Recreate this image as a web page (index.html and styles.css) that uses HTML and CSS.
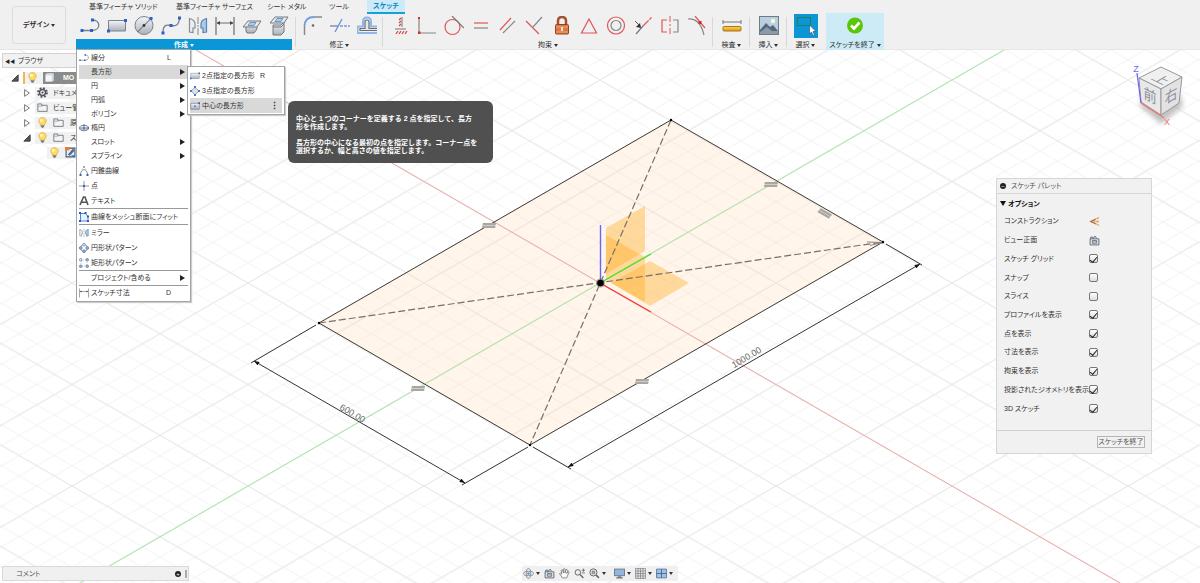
FILE: index.html
```html
<!DOCTYPE html>
<html lang="ja">
<head>
<meta charset="utf-8">
<title>スケッチ</title>
<link rel="stylesheet" href="styles.css">
</head>
<body>
<svg class="canvas" viewBox="0 0 1200 583" preserveAspectRatio="xMidYMid slice" aria-hidden="true">
  <defs>
    <pattern id="minor" x="600" y="283" width="35.2" height="20.3" patternUnits="userSpaceOnUse">
      <path d="M0 0L35.2 20.3M0 20.3L35.2 0" stroke="#f3f3f3" stroke-width="1"/>
    </pattern>
    <pattern id="major" x="600" y="283" width="176" height="101.5" patternUnits="userSpaceOnUse">
      <path d="M0 0L176 101.5M0 101.5L176 0" stroke="#e8e8e8" stroke-width="1"/>
    </pattern>
    <marker id="arrow" viewBox="0 0 8 6" refX="8" refY="3" markerWidth="6" markerHeight="4" markerUnits="userSpaceOnUse" orient="auto-start-reverse"><path d="M0 0L8 3L0 6z" fill="#111"/></marker>
    <g id="equal"><path d="M-6 -2H7L6 3H-7z" fill="#cfccc8"/><path d="M-6 -2H7L6.500 0H-6.500zM-6.500 1H6.500L6 3H-7z" fill="#aaa7a3"/></g>
  </defs>
  <rect width="1200" height="583" fill="#fff"/>
  <rect width="1200" height="583" fill="url(#minor)"/>
  <rect width="1200" height="583" fill="url(#major)"/>
  <path d="M671 120L883 242L530 445L319 323z" fill="#ffd8b0" fill-opacity=".25"/>
  <path d="M80 583L1004 50" stroke="#a5e8a5"/>
  <path d="M196 50L1120 583" stroke="#f0a9a6"/>
  <path d="M671 120L883 242L530 445L319 323z" fill="none" stroke="#3c3a38"/>
  <g fill="#ffa917" fill-opacity=".37">
    <path d="M606 228L645 206V251L606 274z"/>
    <path d="M606 235L645 257V302L606 280z"/>
    <path d="M650 261L689 283L650 306L611 283z"/>
  </g>
  <path d="M319 323L883 242M671 120L530 445" stroke="#77706a" stroke-width="1.2" stroke-dasharray="7 3"/>
  <path d="M600.500 225V283" stroke="#6a63f5" stroke-width="1.400"/>
  <path d="M600 283L651 254" stroke="#42e52b" stroke-width="1.400"/>
  <path d="M600 283L651 312" stroke="#fb3a36" stroke-width="1.400"/>
  <circle cx="600.500" cy="283" r="4.500" fill="#777" opacity=".6"/><circle cx="600.500" cy="283" r="3.300" fill="#000"/>
  <g stroke="#333" fill="none">
    <path d="M316 325L251 363M528 447L462 485M533 447L571 469M886 244L922 265"/>
    <path d="M254 361L465 483" marker-start="url(#arrow)" marker-end="url(#arrow)"/>
    <path d="M568 467L920 264" marker-start="url(#arrow)" marker-end="url(#arrow)"/>
  </g>
  <use href="#equal" x="489" y="225"/><use href="#equal" x="771" y="184"/>
  <use href="#equal" x="418" y="388"/><use href="#equal" x="642" y="381"/>
  <g transform="translate(825 213) rotate(30)"><use href="#equal"/></g>
  <path d="M867 242L882 242.500L870 245.500M875 243h8" fill="none" stroke="#8d8882"/>
  <circle cx="883" cy="242" r="1.200"/><circle cx="671" cy="120" r="1.200"/><circle cx="530" cy="445" r="1.200"/><circle cx="319" cy="323" r="1.200"/>
  <text class="dimension" transform="translate(748 360) rotate(-30)">1000.00</text>
  <text class="dimension" transform="translate(351 416) rotate(30)">600.00</text>
</svg>

<svg class="defs" aria-hidden="true"><defs>
  <linearGradient id="steel" x1="0" y1="0" x2="0" y2="1"><stop offset="0" stop-color="#f4f6f8"/><stop offset="1" stop-color="#a9b1ba"/></linearGradient>
  <linearGradient id="amber" x1="0" y1="0" x2="0" y2="1"><stop offset="0" stop-color="#ffd45a"/><stop offset="1" stop-color="#dd9812"/></linearGradient>
  <symbol id="i-line" viewBox="0 0 20 20"><path d="M2 14.500H12C21 14.500 21 4 12.500 4" fill="none" stroke="#777e86" stroke-width="1.300"/><path d="M.5 13h3v3h-3zM10 13h3v3h-3zM11 2.500h3v3h-3z" fill="#2c62c8"/></symbol>
  <symbol id="i-rect" viewBox="0 0 20 20"><path d="M1.500 4.500h17v10.500h-17z" fill="url(#steel)" stroke="#7b838c"/><path d="M17 3h3v3h-3zM0 13.500h3v3H0z" fill="#2c62c8"/></symbol>
  <symbol id="i-circle" viewBox="0 0 20 20"><circle cx="10" cy="9.500" r="9" fill="url(#steel)" stroke="#7b838c"/><path d="M3.500 16L17 2.500" stroke="#555"/><circle cx="10" cy="9.500" r="1.400" fill="#333"/><path d="M15.500 1h3v3h-3z" fill="#2c62c8"/></symbol>
  <symbol id="i-spline" viewBox="0 0 20 20"><path d="M2 17C2 9 5 8.500 10 9.500S18 9 18.500 2" fill="none" stroke="#777e86" stroke-width="1.300"/><path d="M.5 15.500h3v3h-3zM8.500 8h3v3h-3zM17 .5h3v3h-3z" fill="#2c62c8"/></symbol>
  <symbol id="i-mirror" viewBox="0 0 20 20"><path d="M1.500 2.500Q7 4 7 8V12H5v4.500L1.500 16z" fill="#eceef0" stroke="#868c93" stroke-width="1.200"/><path d="M18.500 2.500Q13 4 13 8V12h2v4.500l3.500-.5z" fill="#a7cbed" stroke="#5d83ab" stroke-width="1.200"/><path d="M10 1v18" stroke="#888" stroke-dasharray="7 1 2 1"/></symbol>
  <symbol id="i-dim" viewBox="0 0 20 20"><path d="M1 1v18M19 1v18M2 7h16" stroke="#686e75" stroke-width="1.200"/><path d="M1.500 7L5 5v4zM18.500 7L15 5v4z" fill="#444"/></symbol>
  <symbol id="i-project" viewBox="0 0 20 20"><path d="M4 8h9l2-2v7l-3 4H5l-1-2z" fill="url(#steel)" stroke="#727980"/><path d="M6 5h13l-4 6H1z" fill="#e6eaed" stroke="#727980"/><path d="M8 6.500h6l-2 3H6z" fill="#a9d0f1" stroke="#5d83ab" stroke-width=".8"/></symbol>
  <symbol id="i-intersect" viewBox="0 0 20 20"><path d="M4 9h8l3-3v10l-3 3H4z" fill="url(#steel)" stroke="#727980"/><path d="M4 11h8l3-3" fill="none" stroke="#727980"/><path d="M6 1h13l-4 6H1z" fill="#e6eaed" stroke="#727980"/><path d="M8 2.500h6l-2 3H6z" fill="#a9d0f1" stroke="#5d83ab" stroke-width=".8"/></symbol>
  <symbol id="i-fillet" viewBox="0 0 20 20"><path d="M1.500 10Q2 1 11 1" fill="none" stroke="#6f9fe0" stroke-width="1.800"/><path d="M1.500 10v9M11 1h8" stroke="#858a90" stroke-width="1.500"/><circle cx="10" cy="9.500" r="1.300" fill="#666"/></symbol>
  <symbol id="i-trim" viewBox="0 0 20 20"><path d="M0 10h8" stroke="#7b838c" stroke-width="1.300"/><path d="M5 16L12 3" stroke="#5d92dc" stroke-width="1.300"/><path d="M10 10h10" stroke="#6f9fe0" stroke-width="1.300" stroke-dasharray="3 1"/></symbol>
  <symbol id="i-offset" viewBox="0 0 20 20"><path d="M0.500 16.500V10.500H6V6q0-4.500 4-4.500t4 4.500v4.500h6M0 17h20" fill="none" stroke="#8eb6ea" stroke-width="2"/><path d="M20 14.500H3V12.500h5V6q0-2 2-2t2 2v6.500h8" fill="#e6e8ea" stroke="#676e77" stroke-width="1.200"/></symbol>
  <symbol id="i-ground" viewBox="0 0 20 20"><path d="M5 13h11M12 1v10" stroke="#777"/><path d="M6 18l2-3M9 18l2-3M12 18l2-3M15 18l2-3M9 4l2-2M9 7l2-2M9 10l2-2" stroke="#d9484b" stroke-width="1.300"/></symbol>
  <symbol id="i-coincident" viewBox="0 0 20 20"><path d="M2 3v14M2 17h17" stroke="#868686" stroke-width="1.200"/><path d="M1 1h2v2H1zM1 15.500h2.500v2.500H1z" fill="#d32d32"/></symbol>
  <symbol id="i-tangent" viewBox="0 0 20 20"><circle cx="8.500" cy="11" r="7.500" fill="none" stroke="#df5557" stroke-width="1.200"/><path d="M8 0l12 12" stroke="#777" stroke-width="1.200"/></symbol>
  <symbol id="i-equal" viewBox="0 0 20 20"><path d="M3 7h14" stroke="#df5557" stroke-width="1.200"/><path d="M3 12h14" stroke="#888" stroke-width="1.200"/></symbol>
  <symbol id="i-parallel" viewBox="0 0 20 20"><path d="M2 14L13 2" stroke="#df5557" stroke-width="1.200"/><path d="M5 17L17 5" stroke="#888" stroke-width="1.200"/></symbol>
  <symbol id="i-perp" viewBox="0 0 20 20"><path d="M1 5l13 13" stroke="#df5557" stroke-width="1.200"/><path d="M8 11l9-10" stroke="#888" stroke-width="1.200"/></symbol>
  <symbol id="i-lock" viewBox="0 0 20 20"><path d="M6 9V5q0-4 4-4t4 4v4" fill="none" stroke="#a55131" stroke-width="2.500"/><rect x="3.500" y="8.500" width="13" height="9.500" rx="1" fill="#d9783f" stroke="#94431f"/><path d="M4 11h12M4 16h12" stroke="#f0a87b"/><path d="M10 11v4" stroke="#fff" stroke-width="1.500"/></symbol>
  <symbol id="i-triangle" viewBox="0 0 20 20"><path d="M10 3l7.500 14h-15z" fill="none" stroke="#df5557" stroke-width="1.200"/></symbol>
  <symbol id="i-concentric" viewBox="0 0 20 20"><circle cx="10" cy="9.500" r="8.500" fill="none" stroke="#df5557" stroke-width="1.200"/><circle cx="10" cy="9.500" r="5" fill="none" stroke="#888" stroke-width="1.200"/></symbol>
  <symbol id="i-collinear" viewBox="0 0 20 20"><path d="M3 18l7-8" stroke="#777" stroke-width="1.200"/><path d="M10 10l9-9" stroke="#df5557" stroke-width="1.300" stroke-dasharray="8 1 3 1"/><path d="M2 5l5 5" stroke="#555"/><path d="M8 12l-5-1 4-4z" fill="#333"/></symbol>
  <symbol id="i-symmetry" viewBox="0 0 20 20"><path d="M7 4H2v12h5" fill="none" stroke="#df5557" stroke-width="1.200"/><path d="M13 4h5v12h-5" fill="none" stroke="#888" stroke-width="1.200"/><path d="M10 0v20" stroke="#df5557" stroke-dasharray="6 2 2 2"/></symbol>
  <symbol id="i-curvature" viewBox="0 0 20 20"><path d="M1 3q12-1 16 16" fill="none" stroke="#888" stroke-width="1.200"/><path d="M8 0l10 12" stroke="#df5557" stroke-width="1.200"/><path d="M11.500 5h3v3h-3z" fill="#d32d32"/></symbol>
  <symbol id="i-measure" viewBox="0 0 20 20"><path d="M1 6h18M1 4v4M19 4v4" stroke="#777"/><rect x="1" y="10.500" width="18" height="4.500" rx="1" fill="url(#amber)" stroke="#a9781c"/></symbol>
  <symbol id="i-image" viewBox="0 0 20 20"><rect x=".5" y=".5" width="19" height="18" fill="#b9d0e2" stroke="#707a83"/><path d="M1 14l6-7 4 4 3-2 5 6v3H1z" fill="#566779"/><path d="M1 16l7-5 5 4 6 0v3H1z" fill="#8b9ba9"/><circle cx="14" cy="5" r="2.200" fill="#fffbd0"/></symbol>
  <symbol id="i-select" viewBox="0 0 24 24"><path d="M3.500 3.500h13v8h-13z" fill="none" stroke="#22815d" stroke-width="1.200"/><path d="M15.500 11v9l2-2 1.500 3.500 1.500-.7L19 17.500h3z" fill="#fff" stroke="#456" stroke-width=".7"/></symbol>
  <symbol id="i-done" viewBox="0 0 20 20"><circle cx="10" cy="9.500" r="8" fill="#5bc607"/><path d="M6 9.500l3 3 5.500-6" fill="none" stroke="#fff" stroke-width="2.600"/></symbol>
  <symbol id="i-diamond" viewBox="0 0 20 20"><path d="M10 2.500l7.500 7.500-7.500 7.500L2.500 10z" fill="#dde2e7" stroke="#7b838c" stroke-width="1.500"/><path d="M8 0h4v4H8zM0 8h4v4H0zM16 8h4v4h-4zM8 16h4v4H8z" fill="#4479cf"/></symbol>
  <symbol id="i-centerrect" viewBox="0 0 20 20"><path d="M1.500 4.500h17v12h-17z" fill="url(#steel)" stroke="#7b838c" stroke-width="1.500"/><path d="M8.500 9h3v3h-3zM16.500 2.500H20V6h-3.500z" fill="#2c62c8"/></symbol>
  <symbol id="i-ellipse" viewBox="0 0 20 20"><ellipse cx="10" cy="10" rx="9" ry="5.500" fill="url(#steel)" stroke="#68727d" stroke-width="1.500"/><path d="M1 10h18M10 5v10" stroke="#667"/><path d="M8.500 8.500h3v3h-3zM17 8.500h3v3h-3zM8.500 3h3v3h-3z" fill="#2c62c8"/></symbol>
  <symbol id="i-conic" viewBox="0 0 20 20"><path d="M3 17C4 4 16 4 17 17" fill="none" stroke="#68727d" stroke-width="1.600"/><path d="M5 7l5-5 5 5" fill="none" stroke="#999" stroke-dasharray="2 1"/><path d="M1 16h4v4H1zM15 16h4v4h-4z" fill="#2c62c8"/><circle cx="10" cy="2" r="1.800" fill="#888"/></symbol>
  <symbol id="i-point" viewBox="0 0 20 20"><path d="M10 0v20M0 10h20" stroke="#778" stroke-width="1.500"/><path d="M8 8h4v4H8z" fill="#2c62c8"/></symbol>
  <symbol id="i-glyph" viewBox="0 0 20 20"><path d="M2 18L9 2h3l6 16M5.500 12.500h9" fill="none" stroke="#555" stroke-width="3.200"/></symbol>
  <symbol id="i-mesh" viewBox="0 0 20 20"><path d="M3 3h10l5 6v9H3z" fill="#e7f1fb" stroke="#4d85cf" stroke-width="2"/><path d="M0 0h4v4H0zM11 0h4v4h-4zM0 16h4v4H0zM16 16h4v4h-4zM16 7h4v4h-4z" fill="#235bc2"/></symbol>
  <symbol id="i-circpat" viewBox="0 0 20 20"><circle cx="10" cy="10" r="7" fill="none" stroke="#778" stroke-width="1.300"/><g fill="#8cb4e0" stroke="#4e6f95" stroke-width="1.300"><circle cx="3.500" cy="10" r="2.800"/><circle cx="16.500" cy="10" r="2.800"/><circle cx="10" cy="16.500" r="2.800"/><circle cx="10" cy="3.500" r="2.800" fill="#eee"/></g></symbol>
  <symbol id="i-rectpat" viewBox="0 0 20 20"><path d="M4 4h12v12H4z" fill="none" stroke="#889" stroke-dasharray="2 2"/><g fill="#8cb4e0" stroke="#4e6f95" stroke-width="1.300"><circle cx="16.500" cy="3.500" r="2.600"/><circle cx="3.500" cy="16.500" r="2.600"/><circle cx="16.500" cy="16.500" r="2.600"/><circle cx="3.500" cy="3.500" r="2.600" fill="#eee"/></g></symbol>
  <symbol id="i-bulb" viewBox="0 0 20 20"><path d="M6 13Q2 9 3.500 5 6 1 10 1t6.500 4Q18 9 14 13v2H6z" fill="#ffdc61" stroke="#c99a2b"/><ellipse cx="8" cy="6" rx="2.500" ry="3" fill="#fff8cf"/><path d="M7 15h6v3l-3 2-3-2z" fill="#7c7f84"/></symbol>
  <symbol id="i-folder" viewBox="0 0 20 20"><path d="M1.500 17V3.500h7V6h10v11z" fill="#f4f4f4" stroke="#6c747e" stroke-width="1.600"/><path d="M2 7.500h8" stroke="#6c747e"/></symbol>
  <symbol id="i-gear" viewBox="0 0 20 20"><circle cx="10" cy="10" r="8" fill="none" stroke="#50545a" stroke-width="3.500" stroke-dasharray="3.300 3"/><circle cx="10" cy="10" r="5.500" fill="#eee" stroke="#50545a" stroke-width="2.500"/><circle cx="10" cy="10" r="2" fill="#50545a"/></symbol>
  <symbol id="i-cube" viewBox="0 0 20 20"><path d="M2 5l3-3h13v13l-3 3H2z" fill="#f4f6f8" stroke="#7c858e"/><path d="M2 5h13v13M15 5l3-3" fill="none" stroke="#a7afb7"/></symbol>
  <symbol id="i-sketch" viewBox="0 0 20 20"><path d="M2 2h16v16H2z" fill="#e8eff7" stroke="#3c5878" stroke-width="2"/><path d="M5 14l9-11 4 3-9 10z" fill="#596b80"/><path d="M0 0h8v6H0z" fill="#ef7b24"/><path d="M12 15h6v3h-6z" fill="#3b71b5"/></symbol>
  <symbol id="i-open" viewBox="0 0 10 10"><path d="M9 1v8H1z" fill="#555" stroke="#333"/></symbol>
  <symbol id="i-closed" viewBox="0 0 10 10"><path d="M2 .8L8 5 2 9.200z" fill="#fff" stroke="#555"/></symbol>
  <symbol id="i-construct" viewBox="0 0 20 20"><path d="M18 3L3 10l15 7M18 10H8" fill="none" stroke="#ef9a42" stroke-width="2.400" stroke-dasharray="5 1"/><path d="M12 6L3 10l9 4" fill="none" stroke="#7d6b5c" stroke-width="1.800"/></symbol>
  <symbol id="i-lookat" viewBox="0 0 20 20"><path d="M2 7h16v11H2zM3 7V4h4v3M8 6l3-4 3 4" fill="#e7ebef" stroke="#56616e" stroke-width="1.600"/><path d="M6 10h8v5H6zM6 12.500h8" fill="#fff" stroke="#56616e" stroke-width="1.400"/></symbol>
  <symbol id="i-orbit" viewBox="0 0 20 20"><ellipse cx="10" cy="10" rx="9" ry="4" fill="none" stroke="#7d8085" stroke-width="1.500"/><ellipse cx="10" cy="10" rx="4" ry="9" fill="none" stroke="#7d8085" stroke-width="1.500"/><circle cx="10" cy="10" r="2.500" fill="#4aa4ec"/></symbol>
  <symbol id="i-hand" viewBox="0 0 20 20"><path d="M6 18L1 10q2-2 4 1L4 4q1-2 3 0l1 5V2q2-2 3 0v7l2-6q2-1 3 1l-2 6 2-3q3-1 2 1l-4 10z" fill="#fafafa" stroke="#666" stroke-width="1.300"/></symbol>
  <symbol id="i-zoom" viewBox="0 0 20 20"><circle cx="7" cy="8" r="5" fill="#e7f2fa" stroke="#666" stroke-width="1.800"/><path d="M11 12l6 6" stroke="#666" stroke-width="2.500"/><path d="M14 4h6M17 1v6M14 9h6" stroke="#555" stroke-width="1.300"/></symbol>
  <symbol id="i-fit" viewBox="0 0 20 20"><circle cx="8" cy="8" r="6.500" fill="#e9eef2" stroke="#666" stroke-width="1.800"/><path d="M5.500 5.500h5v5h-5z" fill="#9bb0c2" stroke="#666"/><path d="M13 13l5 5" stroke="#666" stroke-width="2.800"/></symbol>
  <symbol id="i-display" viewBox="0 0 20 20"><rect x="1" y="2" width="18" height="12" fill="#90b7e4" stroke="#6d737a" stroke-width="1.600"/><path d="M7 15h6v2h3v2H4v-2h3z" fill="#777"/></symbol>
  <symbol id="i-grid" viewBox="0 0 20 20"><path d="M1 1h18v18H1zM5.500 1v18M10 1v18M14.500 1v18M1 5.500h18M1 10h18M1 14.500h18" fill="#e9e9e9" stroke="#70757b" stroke-width="1.200"/></symbol>
  <symbol id="i-views" viewBox="0 0 20 20"><path d="M1 2h18v16H1z" fill="#9fc1e8" stroke="#59789d" stroke-width="1.600"/><path d="M10 2v16M1 10h18" stroke="#476486" stroke-width="1.600"/></symbol>
</defs></svg>

<header class="toolbar">
  <button class="workspace">デザイン <span class="caret"></span></button>
  <div class="ribbon">
    <nav class="tabs">
      <button class="tab">基準フィーチャ ソリッド</button>
      <button class="tab">基準フィーチャ サーフェス</button>
      <button class="tab">シート メタル</button>
      <button class="tab">ツール</button>
      <button class="tab tab-active">スケッチ</button>
    </nav>
    <div class="groups">
      <section class="group group-create">
        <div class="tools">
          <button class="tool" aria-label="線分"><svg><use href="#i-line"/></svg></button>
          <button class="tool" aria-label="長方形"><svg><use href="#i-rect"/></svg></button>
          <button class="tool" aria-label="円"><svg><use href="#i-circle"/></svg></button>
          <button class="tool" aria-label="スプライン"><svg><use href="#i-spline"/></svg></button>
          <button class="tool" aria-label="ミラー"><svg><use href="#i-mirror"/></svg></button>
          <button class="tool" aria-label="寸法"><svg><use href="#i-dim"/></svg></button>
          <button class="tool" aria-label="プロジェクト"><svg><use href="#i-project"/></svg></button>
          <button class="tool" aria-label="交差"><svg><use href="#i-intersect"/></svg></button>
        </div>
        <button class="group-label">作成 <span class="caret"></span></button>
      </section>
      <section class="group">
        <div class="tools">
          <button class="tool" aria-label="フィレット"><svg><use href="#i-fillet"/></svg></button>
          <button class="tool" aria-label="トリム"><svg><use href="#i-trim"/></svg></button>
          <button class="tool" aria-label="オフセット"><svg><use href="#i-offset"/></svg></button>
        </div>
        <button class="group-label">修正 <span class="caret"></span></button>
      </section>
      <section class="group">
        <div class="tools">
          <button class="tool" aria-label="水平/垂直"><svg><use href="#i-ground"/></svg></button>
          <button class="tool" aria-label="一致"><svg><use href="#i-coincident"/></svg></button>
          <button class="tool" aria-label="接線"><svg><use href="#i-tangent"/></svg></button>
          <button class="tool" aria-label="等値"><svg><use href="#i-equal"/></svg></button>
          <button class="tool" aria-label="平行"><svg><use href="#i-parallel"/></svg></button>
          <button class="tool" aria-label="直交"><svg><use href="#i-perp"/></svg></button>
          <button class="tool" aria-label="固定"><svg><use href="#i-lock"/></svg></button>
          <button class="tool" aria-label="中点"><svg><use href="#i-triangle"/></svg></button>
          <button class="tool" aria-label="同心円"><svg><use href="#i-concentric"/></svg></button>
          <button class="tool" aria-label="同一直線上"><svg><use href="#i-collinear"/></svg></button>
          <button class="tool" aria-label="対称"><svg><use href="#i-symmetry"/></svg></button>
          <button class="tool" aria-label="曲率"><svg><use href="#i-curvature"/></svg></button>
        </div>
        <button class="group-label">拘束 <span class="caret"></span></button>
      </section>
      <section class="group group-single">
        <div class="tools"><button class="tool" aria-label="計測"><svg><use href="#i-measure"/></svg></button></div>
        <button class="group-label">検査 <span class="caret"></span></button>
      </section>
      <section class="group group-single">
        <div class="tools"><button class="tool" aria-label="画像"><svg><use href="#i-image"/></svg></button></div>
        <button class="group-label">挿入 <span class="caret"></span></button>
      </section>
      <section class="group group-single group-last">
        <div class="tools"><button class="tool tool-selected" aria-label="選択"><svg><use href="#i-select"/></svg></button></div>
        <button class="group-label">選択 <span class="caret"></span></button>
      </section>
      <section class="group group-finish">
        <div class="tools"><button class="tool" aria-label="終了"><svg><use href="#i-done"/></svg></button></div>
        <button class="group-label">スケッチを終了 <span class="caret"></span></button>
      </section>
    </div>
  </div>
</header>

<aside class="browser">
  <h2 class="browser-title"><span class="rewind">◀◀</span>ブラウザ</h2>
  <ul class="tree">
    <li class="node node-root"><svg class="twist"><use href="#i-open"/></svg><span class="node-body root-body"><svg><use href="#i-bulb"/></svg><span class="root-name"><svg><use href="#i-cube"/></svg>MO</span></span></li>
    <li class="node"><svg class="twist"><use href="#i-closed"/></svg><span class="node-body"><svg><use href="#i-gear"/></svg>ドキュメ</span></li>
    <li class="node"><svg class="twist"><use href="#i-closed"/></svg><span class="node-body"><svg><use href="#i-folder"/></svg>ビュー管</span></li>
    <li class="node"><svg class="twist"><use href="#i-closed"/></svg><span class="node-body"><svg><use href="#i-bulb"/></svg><svg><use href="#i-folder"/></svg>原</span></li>
    <li class="node"><svg class="twist"><use href="#i-open"/></svg><span class="node-body"><svg><use href="#i-bulb"/></svg><svg><use href="#i-folder"/></svg>ス</span></li>
    <li class="node node-leaf"><span class="node-body"><svg><use href="#i-bulb"/></svg><svg><use href="#i-sketch"/></svg></span></li>
  </ul>
</aside>

<div class="menu create-menu">
  <button class="item"><svg><use href="#i-line"/></svg><span>線分</span><kbd>L</kbd></button>
  <button class="item item-on"><span>長方形</span><i class="more"></i></button>
  <button class="item"><span>円</span><i class="more"></i></button>
  <button class="item"><span>円弧</span><i class="more"></i></button>
  <button class="item"><span>ポリゴン</span><i class="more"></i></button>
  <button class="item"><svg><use href="#i-ellipse"/></svg><span>楕円</span></button>
  <button class="item"><span>スロット</span><i class="more"></i></button>
  <button class="item"><span>スプライン</span><i class="more"></i></button>
  <button class="item item-tall"><svg><use href="#i-conic"/></svg><span>円錐曲線</span></button>
  <button class="item item-tall"><svg><use href="#i-point"/></svg><span>点</span></button>
  <button class="item item-tall"><svg><use href="#i-glyph"/></svg><span>テキスト</span></button>
  <hr>
  <button class="item item-tall"><svg><use href="#i-mesh"/></svg><span>曲線をメッシュ断面にフィット</span></button>
  <hr>
  <button class="item item-tall"><svg><use href="#i-mirror"/></svg><span>ミラー</span></button>
  <button class="item item-tall"><svg><use href="#i-circpat"/></svg><span>円形状パターン</span></button>
  <button class="item item-tall"><svg><use href="#i-rectpat"/></svg><span>矩形状パターン</span></button>
  <hr>
  <button class="item"><span>プロジェクト/含める</span><i class="more"></i></button>
  <hr>
  <button class="item"><svg><use href="#i-dim"/></svg><span>スケッチ寸法</span><kbd>D</kbd></button>
</div>

<div class="menu rect-menu">
  <button class="item item-tall"><svg><use href="#i-rect"/></svg><span>2点指定の長方形</span><kbd>R</kbd></button>
  <button class="item item-tall"><svg><use href="#i-diamond"/></svg><span>3点指定の長方形</span></button>
  <button class="item item-tall item-on"><svg><use href="#i-centerrect"/></svg><span>中心の長方形</span><b class="dots">⋮</b></button>
</div>

<div class="tip" role="tooltip">
  <p>中心と 1 つのコーナーを定義する 2 点を指定して、長方<br>形を作成します。</p>
  <p>長方形の中心になる最初の点を指定します。コーナー点を<br>選択するか、幅と高さの値を指定します。</p>
</div>

<svg class="viewcube" viewBox="0 0 60 70" aria-hidden="true">
  <defs><filter id="soft"><feGaussianBlur stdDeviation="2.500"/></filter></defs>
  <path d="M10 46L31 64L53 46L50 34H12z" fill="#999" opacity=".6" filter="url(#soft)"/>
  <path d="M9 18L31 7L52 17L31 29z" fill="#f0f0f0" stroke="#999"/>
  <path d="M9 18L31 29L31 55L11 42z" fill="#e8e8e8" stroke="#999"/>
  <path d="M31 29L52 17L49 43L31 55z" fill="#e2e2e2" stroke="#999"/>
  <text class="face" transform="matrix(.87 .42 -.75 .45 27 22)">上</text>
  <text class="face" transform="matrix(.88 .45 0 1 20 41)">前</text>
  <text class="face" transform="matrix(.85 -.48 0 1 41 41)">右</text>
  <path d="M7 13L11 43" stroke="#6f68ed" stroke-width="1.300"/>
  <path d="M11 43L34 58" stroke="#ef7774" stroke-width="1.300"/>
  <text class="axis axis-z" x="6" y="12">Z</text>
  <text class="axis axis-x" x="37" y="65">X</text>
</svg>

<section class="palette">
  <h2 class="palette-title"><span class="knob">−</span>スケッチ パレット</h2>
  <div class="palette-body">
    <h3 class="palette-section"><span class="caret"></span>オプション</h3>
    <div class="options">
      <div class="option"><label for="o1">コンストラクション</label><button id="o1"><svg><use href="#i-construct"/></svg></button></div>
      <div class="option"><label for="o2">ビュー正面</label><button id="o2"><svg><use href="#i-lookat"/></svg></button></div>
      <div class="option"><label for="o3">スケッチ グリッド</label><input id="o3" type="checkbox" checked></div>
      <div class="option"><label for="o4">スナップ</label><input id="o4" type="checkbox"></div>
      <div class="option"><label for="o5">スライス</label><input id="o5" type="checkbox"></div>
      <div class="option"><label for="o6">プロファイルを表示</label><input id="o6" type="checkbox" checked></div>
      <div class="option"><label for="o7">点を表示</label><input id="o7" type="checkbox" checked></div>
      <div class="option"><label for="o8">寸法を表示</label><input id="o8" type="checkbox" checked></div>
      <div class="option"><label for="o9">拘束を表示</label><input id="o9" type="checkbox" checked></div>
      <div class="option"><label for="o10">投影されたジオメトリを表示</label><input id="o10" type="checkbox" checked></div>
      <div class="option"><label for="o11">3D スケッチ</label><input id="o11" type="checkbox" checked></div>
    </div>
  </div>
  <footer class="palette-foot"><button class="finish">スケッチを終了</button></footer>
</section>

<div class="comments"><span>コメント</span><button class="knob" aria-label="追加">+</button><span class="grip"></span></div>

<nav class="navbar">
  <button aria-label="オービット"><svg><use href="#i-orbit"/></svg><span class="caret"></span></button>
  <button aria-label="ビュー正面"><svg><use href="#i-lookat"/></svg></button>
  <button aria-label="画面移動"><svg><use href="#i-hand"/></svg></button>
  <button aria-label="ズーム"><svg><use href="#i-zoom"/></svg></button>
  <button aria-label="フィット"><svg><use href="#i-fit"/></svg><span class="caret"></span></button>
  <button class="nav-display" aria-label="表示設定"><svg><use href="#i-display"/></svg><span class="caret"></span></button>
  <button aria-label="グリッド"><svg><use href="#i-grid"/></svg><span class="caret"></span></button>
  <button aria-label="ビューポート"><svg><use href="#i-views"/></svg><span class="caret"></span></button>
</nav>
</body>
</html>
```
FILE: styles.css
```css
* { box-sizing: border-box; }

body {
  margin: 0;
  min-height: 100vh;
  position: relative;
  overflow: hidden;
  color: #333;
  font: 7px/12px "Liberation Sans", "Noto Sans CJK JP", sans-serif;
  font-feature-settings: "palt";
}

button {
  margin: 0;
  padding: 0;
  border: 0;
  background: none;
  color: inherit;
  font: inherit;
  font-feature-settings: inherit;
  white-space: nowrap;
}

h2, h3, p, ul { margin: 0; padding: 0; font-size: inherit; font-weight: normal; }
svg { display: block; flex: none; }
.defs { position: absolute; width: 0; height: 0; }

.canvas { position: absolute; inset: 0; width: 100%; height: 100%; }
.dimension { font: 9px "Liberation Sans", sans-serif; fill: #666; text-anchor: middle; }

.caret {
  display: inline-block;
  border: 2px solid transparent;
  border-top: 3px solid currentColor;
  border-bottom: 0;
  vertical-align: middle;
}

/* Toolbar */
.toolbar {
  position: relative;
  display: flex;
  gap: 10px;
  height: 50px;
  padding-left: 12px;
  background: #f0f0f0;
  border-bottom: 1px solid #e6e6e6;
}
.workspace {
  width: 54px;
  height: 38px;
  margin-top: 6px;
  border: 1px solid #dcdcdc;
  border-radius: 3px;
  font-weight: bold;
}
.ribbon { flex: 1; }
.tabs {
  display: grid;
  grid-template-columns: 87px 91px 62px 38px 38px;
  height: 13px;
  padding-left: 13px;
}
.tab { text-align: left; }
.tab-active {
  text-align: center;
  background: #cdeaf7;
  border-bottom: 2px solid #1a9edb;
  color: #0a87c7;
  font-weight: bold;
}
.groups { display: flex; height: 37px; }
.group { display: flex; flex-direction: column; padding: 0 3px; position: relative; }
.group::after {
  content: "";
  position: absolute;
  right: 0;
  top: 4px;
  bottom: 3px;
  border-right: 1px solid #d9d9d9;
}
.tools { display: flex; justify-content: center; height: 26px; }
.tool { display: flex; align-items: center; justify-content: center; width: 27px; height: 26px; }
.tool svg { width: 20px; height: 20px; }
.group-label { height: 11px; line-height: 11px; }
.group-create { padding: 0 4px 0 0; }
.group-create .group-label { background: #0a96d7; color: #fff; font-weight: bold; }
.group-single { width: 37px; }
.group-last::after, .group-finish::after { display: none; }
.tool-selected { width: 24px; height: 24px; margin-top: 1px; background: #0a96d7; }
.tool-selected svg { width: 24px; height: 24px; }
.group-finish { width: 58px; padding: 0; margin-left: 2px; background: #cdeaf7; }

/* Browser */
.browser { position: absolute; left: 2px; top: 53px; width: 187px; }
.browser-title {
  display: flex;
  gap: 3px;
  padding-left: 2px;
  height: 15px;
  line-height: 14px;
  background: #f1f1f1;
  border: 1px solid #d3d3d3;
}
.rewind { font-size: 5px; color: #222; }
.tree { list-style: none; padding: 2px 0 0 21px; }
.node { display: flex; align-items: center; gap: 4px; height: 15px; white-space: nowrap; }
.node svg { width: 11px; height: 11px; }
.node .twist { width: 8px; height: 8px; }
.node-root { margin-left: -12px; }
.node-body { display: flex; flex: none; align-items: center; gap: 5px; width: 100px; height: 12px; padding-left: 2px; background: #f1f1f1; }
.node-body svg + svg { margin-right: 1px; }
.root-body { border-left: 2px solid #f0b848; }
.root-name { display: flex; align-items: center; gap: 8px; height: 12px; width: 80px; padding-left: 1px; background: #8b8b8b; color: #fff; font-weight: bold; }
.node-leaf { padding-left: 24px; }

/* Menus */
.menu { position: absolute; padding: 1px 2px; background: #fff; border: 1px solid #a4a4a4; box-shadow: 1px 1px 1px #ccc; }
.create-menu { left: 76px; top: 49px; width: 115px; }
.rect-menu { left: 187px; top: 66px; width: 98px; }
.menu hr { height: 1px; margin: 0; border: 0; background: #999; }
.item { display: flex; align-items: center; gap: 2px; width: 100%; height: 14px; padding-right: 3px; text-align: left; }
.item-tall { height: 15px; }
.item svg { width: 10px; height: 10px; }
.item > span:first-child { margin-left: 12px; }
.item-on { background: #d9d9d9; }
.item kbd { margin-left: auto; margin-right: 14px; font: inherit; }
.more { margin-left: auto; border: 3px solid transparent; border-left: 5px solid #222; border-right: 0; }
.dots { margin-left: auto; font-size: 9px; }

.tip {
  position: absolute;
  left: 288px;
  top: 101px;
  width: 205px;
  padding: 14px 8px 8px;
  border-radius: 6px;
  background: #505050;
  color: #fff;
  line-height: 8px;
  font-feature-settings: normal;
  white-space: nowrap;
}
.tip p { font-weight: bold; }
.tip p + p { margin-top: 8px; }

/* View cube */
.viewcube { position: absolute; right: 10px; top: 60px; width: 60px; height: 70px; }
.face { font: 15px "Noto Sans CJK JP", sans-serif; fill: #8b9198; text-anchor: middle; }
.axis { font: 9px "Liberation Sans", sans-serif; text-anchor: middle; }
.axis-z { fill: #6f68ed; }
.axis-x { fill: #ef7774; }

/* Sketch palette */
.palette { position: absolute; right: 48px; top: 178px; width: 156px; background: #f1f1f1; border: 1px solid #d6d6d6; }
.palette-title { display: flex; align-items: center; gap: 5px; height: 15px; padding-left: 3px; color: #555; border-bottom: 1px solid #d6d6d6; }
.knob {
  width: 6px;
  height: 6px;
  border-radius: 50%;
  background: #222;
  color: #fff;
  font-size: 6px;
  line-height: 6px;
  text-align: center;
}
.palette-body { padding: 1px 0 12px; }
.palette-section { display: flex; align-items: center; gap: 2px; height: 17px; padding-left: 3px; color: #111; font-weight: bold; }
.palette-section .caret { border-width: 5px 3px 0; }
.options { display: grid; grid-auto-rows: 1fr; height: 206px; padding-left: 7px; }
.option { display: grid; grid-template-columns: 85px 11px; align-items: center; }
.option label { white-space: nowrap; }
.option svg { width: 11px; height: 11px; }
.option input {
  appearance: none;
  width: 9px;
  height: 9px;
  margin: 0;
  border: 1px solid #777;
  border-radius: 2px;
  background: linear-gradient(#fff, #ddd);
  display: grid;
  place-items: center;
}
.option input:checked::before {
  content: "";
  width: 6px;
  height: 3px;
  border: solid #222;
  border-width: 0 0 1px 1px;
  transform: rotate(-50deg);
}
.palette-foot { display: flex; justify-content: flex-end; padding: 5px 6px 5px 0; border-top: 1px solid #d0d0d0; }
.finish { height: 12px; width: 48px; border: 1px solid #b5b5b5; line-height: 10px; color: #555; }

/* Bottom bars */
.comments {
  position: absolute;
  left: 2px;
  bottom: 2px;
  display: flex;
  align-items: center;
  gap: 4px;
  width: 187px;
  height: 15px;
  padding: 0 1px 0 13px;
  background: #f0f0f0;
  border: 1px solid #d9d9d9;
  color: #555;
}
.comments .knob { margin-left: auto; }
.grip { width: 2px; height: 8px; background: #aaa; }
.navbar {
  position: absolute;
  left: 50%;
  bottom: 2px;
  display: flex;
  align-items: center;
  gap: 4px;
  width: 156px;
  height: 15px;
  margin-left: -78px;
  padding-left: 1px;
  background: #f0f0f0;
}
.navbar button { display: flex; align-items: center; gap: 2px; }
.navbar svg { width: 11px; height: 11px; }
.navbar .nav-display { margin-left: 4px; }
```
